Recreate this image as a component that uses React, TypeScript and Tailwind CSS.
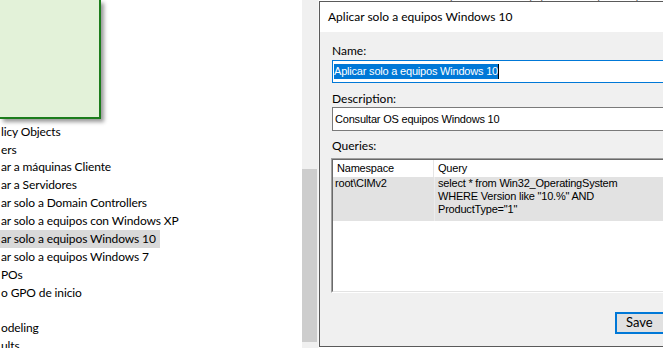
import React from "react";

const seg = { fontFamily: "Lato, 'Noto Sans', sans-serif" };
const ms = { fontFamily: "'Liberation Sans', Arial, sans-serif" };

const treeRows: { t: string; hl?: boolean }[] = [
  { t: "licy Objects" },
  { t: "ers" },
  { t: "ar a máquinas Cliente" },
  { t: "ar a Servidores" },
  { t: "ar solo a Domain Controllers" },
  { t: "ar solo a equipos con Windows XP" },
  { t: "ar solo a equipos Windows 10", hl: true },
  { t: "ar solo a equipos Windows 7" },
  { t: "POs" },
  { t: "o GPO de inicio" },
  { t: "" },
  { t: "odeling" },
  { t: "ults" },
];

export default function App() {
  return (
    <div className="w-[663px] h-[348px] overflow-hidden flex bg-white text-black">
      {/* Left tree panel */}
      <div className="w-[302px] shrink-0 bg-white flex flex-col overflow-hidden" style={seg}>
        <div className="w-[101px] h-[119px] shrink-0 bg-[#e3f2d9] border-r-2 border-b-2 border-[#1c7d1c] shadow-[3px_3px_4px_rgba(0,0,0,0.4)]" />
        <div className="mt-[3.7px] flex flex-col">
          {treeRows.map((r, i) => (
            <div key={i} className="h-[17.9px] flex items-center">
              <span
                className={
                  "text-[12px] leading-[17.9px] tracking-[-0.12px] pl-[1px] pr-[4px] whitespace-nowrap " +
                  (r.hl ? "bg-[#d9d9d9]" : "")
                }
              >
                {r.t}
              </span>
            </div>
          ))}
        </div>
      </div>

      {/* Scrollbar */}
      <div className="w-[16px] shrink-0 bg-[#f0f0f0] flex flex-col">
        <div className="h-[169px] shrink-0" />
        <div className="h-[173px] w-[15px] bg-[#cdcdcd]" />
      </div>
      <div className="w-[1px] shrink-0 bg-[#f7f7f7]" />

      {/* Dialog column */}
      <div className="w-[420px] shrink-0 flex flex-col">
        <div className="h-[1px] overflow-hidden bg-white">
          <div className="text-[11px] leading-[12px] -mt-[10px] pl-[24px] text-[#555] whitespace-nowrap" style={ms}>
            Use estos filtros WMI para filtrar los equipos en los que se aplica esta GPO.
          </div>
        </div>
        <div className="h-[346px] border-t border-l border-b border-[#5a5a5a] flex flex-col bg-[#f0f0f0]">
          {/* title bar */}
          <div className="h-[30px] shrink-0 bg-white flex items-center pl-[8px] text-[12px]" style={seg}>
            Aplicar solo a equipos Windows 10
          </div>
          {/* body */}
          <div className="flex flex-col pl-[12px]">
            <div className="mt-[12px] h-[14px] text-[12px] leading-[14px]" style={seg}>Name:</div>
            <div className="mt-[2px] h-[23px] w-[380px] border border-[#0078d7] bg-white flex items-center pl-[1px]">
              <span className="text-[11px] leading-[15px] tracking-[-0.2px] bg-[#0078d7] text-white whitespace-nowrap" style={ms}>
                Aplicar solo a equipos Windows 10
              </span>
              <span className="w-[1px] h-[15px] bg-black" />
            </div>
            <div className="mt-[9px] h-[14px] text-[12px] leading-[14px]" style={seg}>Description:</div>
            <div className="mt-[1px] h-[24px] w-[380px] border border-[#7a7a7a] bg-white flex items-center pl-[2px]">
              <span className="text-[11px] leading-[15px] tracking-[-0.2px] whitespace-nowrap" style={ms}>
                Consultar OS equipos Windows 10
              </span>
            </div>
            <div className="mt-[8px] h-[14px] text-[12px] leading-[14px]" style={seg}>Queries:</div>
            {/* table */}
            <div className="mt-[5px] -ml-[1px] w-[390px] h-[135px] border-t border-l border-[#a0a0a0] border-b border-b-white border-r border-r-white">
              <div className="h-full border-t border-l border-[#696969] border-b border-b-[#e3e3e3] bg-white flex flex-col tracking-[-0.2px]" style={ms}>
                <div className="h-[17px] flex text-[11px] leading-[16px] bg-white">
                  <div className="w-[101px] pl-[4px] border-r border-[#e5e5e5]">Namespace</div>
                  <div className="pl-[4px]">Query</div>
                </div>
                <div className="flex text-[11px] leading-[13px]">
                  <div className="w-[101px] bg-[#e2e2e2] pl-[2px] h-[44px]">root\CIMv2</div>
                  <div className="w-[1px] bg-[#ececec]" />
                  <div className="flex-1 bg-[#e2e2e2] pl-[3px]">
                    <div>select * from Win32_OperatingSystem</div>
                    <div>WHERE Version like "10.%" AND</div>
                    <div>ProductType="1"</div>
                  </div>
                </div>
              </div>
            </div>
            {/* buttons */}
            <div className="mt-[19px] flex pl-[283px]">
              <div className="w-[75px] h-[22px] border-2 border-[#0078d7] bg-[#e1e1e1] flex items-center pl-[9px] text-[13px]" style={seg}>
                Save
              </div>
            </div>
          </div>
        </div>
      </div>
    </div>
  );
}
